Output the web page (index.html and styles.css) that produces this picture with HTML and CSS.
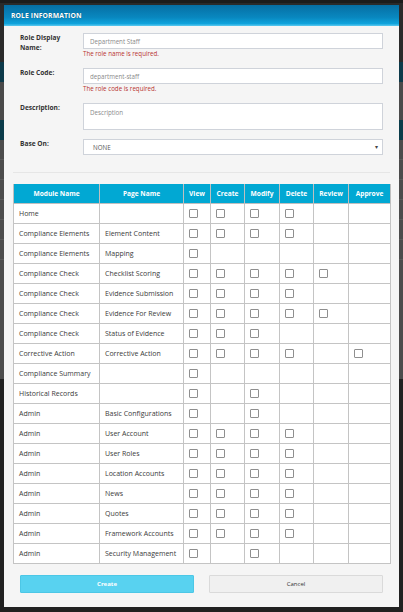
FILE: index.html
```html
<!DOCTYPE html>
<html>
<head>
<meta charset="utf-8">
<link rel="stylesheet" href="styles.css">
</head>
<body>
<div class="modal">
  <div class="modal-header">ROLE INFORMATION</div>
  <div class="modal-body">
    <form class="role-form">
      <div class="form-row">
        <label class="form-label">Role Display Name:</label>
        <div class="form-field">
          <input class="form-input" placeholder="Department Staff">
          <div class="form-error">The role name is required.</div>
        </div>
      </div>
      <div class="form-row">
        <label class="form-label">Role Code:</label>
        <div class="form-field">
          <input class="form-input" placeholder="department-staff">
          <div class="form-error">The role code is required.</div>
        </div>
      </div>
      <div class="form-row">
        <label class="form-label">Description:</label>
        <div class="form-field">
          <textarea class="form-textarea" placeholder="Description"></textarea>
        </div>
      </div>
      <div class="form-row">
        <label class="form-label">Base On:</label>
        <div class="form-field">
          <div class="form-select"><span>NONE</span><span class="caret">&#9662;</span></div>
        </div>
      </div>
    </form>
    <div class="divider"></div>
    <table class="perm-table">
      <colgroup>
        <col class="c-mod"><col class="c-page"><col class="c-view"><col class="c-create"><col class="c-modify"><col class="c-delete"><col class="c-review"><col class="c-approve">
      </colgroup>
      <thead>
        <tr><th>Module Name</th><th>Page Name</th><th>View</th><th>Create</th><th>Modify</th><th>Delete</th><th>Review</th><th>Approve</th></tr>
      </thead>
      <tbody>
        <tr><td>Home</td><td></td><td><i class="cb"></i></td><td><i class="cb"></i></td><td><i class="cb"></i></td><td><i class="cb"></i></td><td></td><td></td></tr>
        <tr><td>Compliance Elements</td><td>Element Content</td><td><i class="cb"></i></td><td><i class="cb"></i></td><td><i class="cb"></i></td><td><i class="cb"></i></td><td></td><td></td></tr>
        <tr><td>Compliance Elements</td><td>Mapping</td><td><i class="cb"></i></td><td></td><td></td><td></td><td></td><td></td></tr>
        <tr><td>Compliance Check</td><td>Checklist Scoring</td><td><i class="cb"></i></td><td><i class="cb"></i></td><td><i class="cb"></i></td><td><i class="cb"></i></td><td><i class="cb"></i></td><td></td></tr>
        <tr><td>Compliance Check</td><td>Evidence Submission</td><td><i class="cb"></i></td><td><i class="cb"></i></td><td><i class="cb"></i></td><td><i class="cb"></i></td><td></td><td></td></tr>
        <tr><td>Compliance Check</td><td>Evidence For Review</td><td><i class="cb"></i></td><td><i class="cb"></i></td><td><i class="cb"></i></td><td><i class="cb"></i></td><td><i class="cb"></i></td><td></td></tr>
        <tr><td>Compliance Check</td><td>Status of Evidence</td><td><i class="cb"></i></td><td><i class="cb"></i></td><td><i class="cb"></i></td><td></td><td></td><td></td></tr>
        <tr><td>Corrective Action</td><td>Corrective Action</td><td><i class="cb"></i></td><td><i class="cb"></i></td><td><i class="cb"></i></td><td><i class="cb"></i></td><td></td><td><i class="cb"></i></td></tr>
        <tr><td>Compliance Summary</td><td></td><td><i class="cb"></i></td><td></td><td></td><td></td><td></td><td></td></tr>
        <tr><td>Historical Records</td><td></td><td><i class="cb"></i></td><td></td><td><i class="cb"></i></td><td></td><td></td><td></td></tr>
        <tr><td>Admin</td><td>Basic Configurations</td><td><i class="cb"></i></td><td></td><td><i class="cb"></i></td><td></td><td></td><td></td></tr>
        <tr><td>Admin</td><td>User Account</td><td><i class="cb"></i></td><td><i class="cb"></i></td><td><i class="cb"></i></td><td><i class="cb"></i></td><td></td><td></td></tr>
        <tr><td>Admin</td><td>User Roles</td><td><i class="cb"></i></td><td><i class="cb"></i></td><td><i class="cb"></i></td><td><i class="cb"></i></td><td></td><td></td></tr>
        <tr><td>Admin</td><td>Location Accounts</td><td><i class="cb"></i></td><td><i class="cb"></i></td><td><i class="cb"></i></td><td><i class="cb"></i></td><td></td><td></td></tr>
        <tr><td>Admin</td><td>News</td><td><i class="cb"></i></td><td><i class="cb"></i></td><td><i class="cb"></i></td><td><i class="cb"></i></td><td></td><td></td></tr>
        <tr><td>Admin</td><td>Quotes</td><td><i class="cb"></i></td><td><i class="cb"></i></td><td><i class="cb"></i></td><td><i class="cb"></i></td><td></td><td></td></tr>
        <tr><td>Admin</td><td>Framework Accounts</td><td><i class="cb"></i></td><td><i class="cb"></i></td><td><i class="cb"></i></td><td><i class="cb"></i></td><td></td><td></td></tr>
        <tr><td>Admin</td><td>Security Management</td><td><i class="cb"></i></td><td></td><td><i class="cb"></i></td><td></td><td></td><td></td></tr>
      </tbody>
    </table>
    <div class="actions">
      <button class="btn btn-primary" type="button">Create</button>
      <button class="btn btn-default" type="button">Cancel</button>
    </div>
  </div>
</div>
</body>
</html>
```
FILE: styles.css
```css
* { box-sizing: border-box; }
html, body { margin: 0; height: 612px; overflow: hidden; }
body {
  padding: 5px 4px 0 4px;
  font-family: "Open Sans", "Noto Sans", sans-serif;
  background:
    repeating-linear-gradient(to bottom, transparent 0 19px, #5a5a5a 19px 20px) 0 140px / 100% 120px no-repeat,
    linear-gradient(to bottom,
      #1c1c1c 0 3px,
      #2a2a2a 3px 62px,
      #0d3a4a 62px 82px,
      #4a4a4a 82px 120px,
      #0b3c4a 120px 140px,
      #4c4c4c 140px 379px,
      #212121 379px 100%);
}
.modal {
  width: 395px;
  height: 602px;
  background: #f5f5f5;
}
.modal-header {
  height: 21px;
  padding-left: 7px;
  display: flex;
  align-items: center;
  color: #fff;
  font-weight: 700;
  font-size: 6.8px;
  letter-spacing: 0.1px;
  text-shadow: 0 0 1px rgba(0,0,0,0.4);
  background: linear-gradient(to bottom, #066ea3 0%, #0988c0 60%, #0ea3dc 88%, #5ccaf0 100%);
}
.modal-body { padding: 7px 9px 0 9px; }
.role-form { padding: 0 7px; display: flex; flex-direction: column; gap: 9px; }
.form-row { display: flex; }
.form-label {
  width: 63px;
  flex: none;
  padding-right: 15px;
  font-size: 6.6px;
  font-weight: 700;
  color: #333;
  line-height: 10px;
}
.form-field { flex: 1; display: flex; flex-direction: column; }
.form-input, .form-textarea, .form-select {
  width: 100%;
  border: 1px solid #cfd3da;
  background: #fff;
  font-family: inherit;
  font-size: 6.2px;
  color: #555;
  outline: none;
  margin: 0;
}
.form-input { height: 16px; padding: 0 6px; }
.form-textarea { height: 27px; padding: 4px 6px; resize: none; display: block; }
.form-input::placeholder, .form-textarea::placeholder { color: #8a8a8a; }
.form-select {
  height: 16px;
  padding: 0 4px 0 9px;
  display: flex;
  align-items: center;
  justify-content: space-between;
  color: #555;
}
.caret { font-size: 6px; color: #444; }
.form-error {
  font-size: 6.2px;
  line-height: 10px;
  color: #b8322f;
}
.divider {
  height: 1px;
  background: #e6e6e6;
  margin: 17px 0 11px 0;
}
.perm-table {
  width: 377px;
  border-collapse: collapse;
  table-layout: fixed;
  background: #fff;
}
.c-mod { width: 86px; }
.c-page { width: 84px; }
.c-view { width: 27px; }
.c-create { width: 34px; }
.c-modify { width: 35px; }
.c-delete { width: 34px; }
.c-review { width: 35px; }
.c-approve { width: 42px; }
.perm-table th {
  height: 19px;
  background: #01a8d3;
  color: #fff;
  font-size: 6.6px;
  font-weight: 700;
  border: 1px solid #bfbfbf;
  border-top: none;
  padding: 0;
  text-align: center;
}
.perm-table td {
  height: 20px;
  border: 1px solid #c4c4c4;
  padding: 0 0 0 5px;
  font-size: 7px;
  color: #3a3a3a;
  white-space: nowrap;
  overflow: hidden;
  vertical-align: middle;
}
.cb {
  display: block;
  width: 9px;
  height: 9px;
  border: 1px solid #8f8f8f;
  border-radius: 1px;
  background: #fff;
}
.actions {
  padding: 0 7px;
  margin-top: 11px;
  display: flex;
  gap: 15px;
}
.btn {
  flex: 1;
  height: 18px;
  font-family: inherit;
  font-size: 6px;
  border-radius: 1px;
  padding: 0;
  margin: 0;
}
.btn-primary {
  background: #58d2f0;
  border: 1px solid #4cc7e6;
  color: #fff;
  font-weight: 700;
}
.btn-default {
  background: #f0f0f0;
  border: 1px solid #dadada;
  color: #333;
}
```
